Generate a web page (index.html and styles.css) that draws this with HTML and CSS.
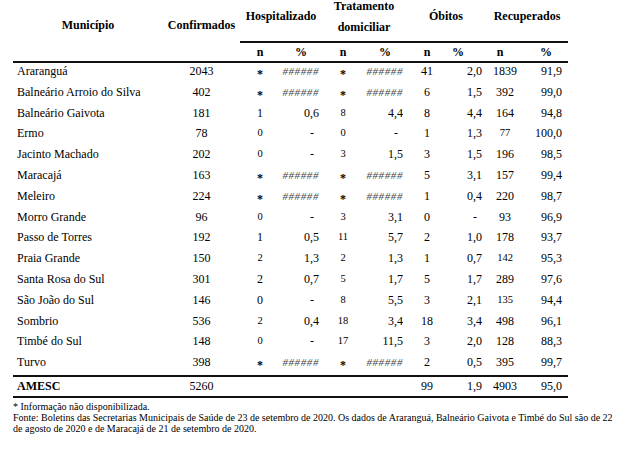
FILE: index.html
```html
<!DOCTYPE html>
<html lang="pt-BR">
<head>
<meta charset="utf-8">
<title>Casos por município - AMESC</title>
<link rel="stylesheet" href="styles.css">
</head>
<body>
<div class="page">
  <table class="t">
    <colgroup>
      <col class="c-mun"><col class="c-conf"><col class="c-n1"><col class="c-p"><col class="c-n"><col class="c-p"><col class="c-n"><col class="c-p2"><col class="c-n2"><col class="c-p3">
    </colgroup>
    <thead>
      <tr class="g">
        <th rowspan="2" class="h-mun">Município</th>
        <th rowspan="2" class="h-conf">Confirmados</th>
        <th colspan="2" class="h-grp">Hospitalizado</th>
        <th colspan="2" class="h-grp h-trat">Tratamento<br>domiciliar</th>
        <th colspan="2" class="h-grp">Óbitos</th>
        <th colspan="2" class="h-grp">Recuperados</th>
      </tr>
      <tr class="u">
        <th>n</th><th>%</th><th>n</th><th>%</th><th>n</th><th class="h-op">%</th><th class="h-rn">n</th><th>%</th>
      </tr>
    </thead>
    <tbody>
      <tr><td class="m">Araranguá</td><td>2043</td><td><span class="a">*</span></td><td class="p"><span class="h">######</span></td><td><span class="a">*</span></td><td class="p"><span class="h">######</span></td><td>41</td><td class="p o">2,0</td><td>1839</td><td class="p r">91,9</td></tr>
      <tr><td class="m">Balneário Arroio do Silva</td><td>402</td><td><span class="a">*</span></td><td class="p"><span class="h">######</span></td><td><span class="a">*</span></td><td class="p"><span class="h">######</span></td><td>6</td><td class="p o">1,5</td><td>392</td><td class="p r">99,0</td></tr>
      <tr><td class="m">Balneário Gaivota</td><td>181</td><td>1</td><td class="p">0,6</td><td class="s">8</td><td class="p">4,4</td><td>8</td><td class="p o">4,4</td><td>164</td><td class="p r">94,8</td></tr>
      <tr><td class="m">Ermo</td><td>78</td><td class="s">0</td><td class="p"><span class="d">-</span></td><td class="s">0</td><td class="p"><span class="d">-</span></td><td>1</td><td class="p o">1,3</td><td class="s">77</td><td class="p r">100,0</td></tr>
      <tr><td class="m">Jacinto Machado</td><td>202</td><td class="s">0</td><td class="p"><span class="d">-</span></td><td class="s">3</td><td class="p">1,5</td><td>3</td><td class="p o">1,5</td><td>196</td><td class="p r">98,5</td></tr>
      <tr><td class="m">Maracajá</td><td>163</td><td><span class="a">*</span></td><td class="p"><span class="h">######</span></td><td><span class="a">*</span></td><td class="p"><span class="h">######</span></td><td>5</td><td class="p o">3,1</td><td>157</td><td class="p r">99,4</td></tr>
      <tr><td class="m">Meleiro</td><td>224</td><td><span class="a">*</span></td><td class="p"><span class="h">######</span></td><td><span class="a">*</span></td><td class="p"><span class="h">######</span></td><td>1</td><td class="p o">0,4</td><td>220</td><td class="p r">98,7</td></tr>
      <tr><td class="m">Morro Grande</td><td>96</td><td class="s">0</td><td class="p"><span class="d">-</span></td><td class="s">3</td><td class="p">3,1</td><td>0</td><td class="p o"><span class="d">-</span></td><td>93</td><td class="p r">96,9</td></tr>
      <tr><td class="m">Passo de Torres</td><td>192</td><td>1</td><td class="p">0,5</td><td class="s">11</td><td class="p">5,7</td><td>2</td><td class="p o">1,0</td><td>178</td><td class="p r">93,7</td></tr>
      <tr><td class="m">Praia Grande</td><td>150</td><td class="s">2</td><td class="p">1,3</td><td class="s">2</td><td class="p">1,3</td><td>1</td><td class="p o">0,7</td><td class="s">142</td><td class="p r">95,3</td></tr>
      <tr><td class="m">Santa Rosa do Sul</td><td>301</td><td>2</td><td class="p">0,7</td><td class="s">5</td><td class="p">1,7</td><td>5</td><td class="p o">1,7</td><td>289</td><td class="p r">97,6</td></tr>
      <tr><td class="m">São João do Sul</td><td>146</td><td>0</td><td class="p"><span class="d">-</span></td><td class="s">8</td><td class="p">5,5</td><td>3</td><td class="p o">2,1</td><td class="s">135</td><td class="p r">94,4</td></tr>
      <tr><td class="m">Sombrio</td><td>536</td><td class="s">2</td><td class="p">0,4</td><td class="s">18</td><td class="p">3,4</td><td>18</td><td class="p o">3,4</td><td>498</td><td class="p r">96,1</td></tr>
      <tr><td class="m">Timbé do Sul</td><td>148</td><td class="s">0</td><td class="p"><span class="d">-</span></td><td class="s">17</td><td class="p">11,5</td><td>3</td><td class="p o">2,0</td><td>128</td><td class="p r">88,3</td></tr>
      <tr><td class="m">Turvo</td><td>398</td><td><span class="a">*</span></td><td class="p"><span class="h">######</span></td><td><span class="a">*</span></td><td class="p"><span class="h">######</span></td><td>2</td><td class="p o">0,5</td><td>395</td><td class="p r">99,7</td></tr>
    </tbody>
    <tfoot>
      <tr class="tot"><td class="m b">AMESC</td><td>5260</td><td></td><td></td><td></td><td></td><td>99</td><td class="p o">1,9</td><td>4903</td><td class="p r">95,0</td></tr>
    </tfoot>
  </table>
  <div class="notes">
    <p>* Informação não disponibilizada.</p>
    <p>Fonte: Boletins das Secretarias Municipais de Saúde de 23 de setembro de 2020. Os dados de Araranguá, Balneário Gaivota e Timbé do Sul são de 22<br>de agosto de 2020 e de Maracajá de 21 de setembro de 2020.</p>
  </div>
</div>
</body>
</html>
```

FILE: styles.css
```css
html, body {
  margin: 0;
  padding: 0;
  background: #fff;
}

body {
  font-family: "Liberation Serif", "Times New Roman", serif;
  color: #000;
}

.page {
  padding-left: 13px;
}

.t {
  border-collapse: collapse;
  table-layout: fixed;
  width: 555px;
  margin-top: -5px;
  font-size: 12px;
}

.c-mun { width: 150px; }
.c-conf { width: 77px; }
.c-n1 { width: 40px; }
.c-n { width: 42px; }
.c-p { width: 42px; }
.c-p2 { width: 38px; }
.c-n2 { width: 38px; }
.c-p3 { width: 44px; }

th {
  font-weight: bold;
  text-align: center;
  padding: 0;
}

.g th {
  height: 43px;
  line-height: 21px;
  padding: 0 0 3px;
  vertical-align: middle;
}

.g .h-grp {
  border-bottom: 2px solid #111;
}

.g .h-mun,
.g .h-conf {
  border-bottom: 2px solid #111;
  vertical-align: middle;
  padding-bottom: 6px;
}

.u th {
  line-height: 16px;
  padding: 1px 0 1px;
  border-bottom: 2px solid #111;
}

.u .h-op { padding-right: 18px; }
.u .h-rn { padding-right: 10px; }

td {
  padding: 0 0 4.8px;
  height: 16px;
  line-height: 16px;
  text-align: center;
  vertical-align: top;
  white-space: nowrap;
}

td.m {
  text-align: left;
  padding-left: 4px;
}

td.p {
  text-align: right;
  padding-right: 3px;
}

td.p.o { padding-right: 4px; }
td.p.r { padding-right: 6px; }

td.s {
  font-size: 10.5px;
}

.a {
  position: relative;
  top: 3px;
  font-size: 12px;
  font-weight: bold;
  line-height: 1;
}

.h {
  font-size: 11px;
  line-height: 1;
  font-style: italic;
  letter-spacing: 0.6px;
  color: #444;
}

.d {
  display: inline-block;
  margin-right: 5px;
}

.tot td {
  border-top: 2px solid #111;
  border-bottom: 2px solid #111;
  padding-top: 1px;
  padding-bottom: 2px;
}

td.b {
  font-weight: bold;
}

.notes {
  margin-top: 3px;
  font-size: 10px;
  line-height: 11px;
}

.notes p {
  margin: 0;
}
```
